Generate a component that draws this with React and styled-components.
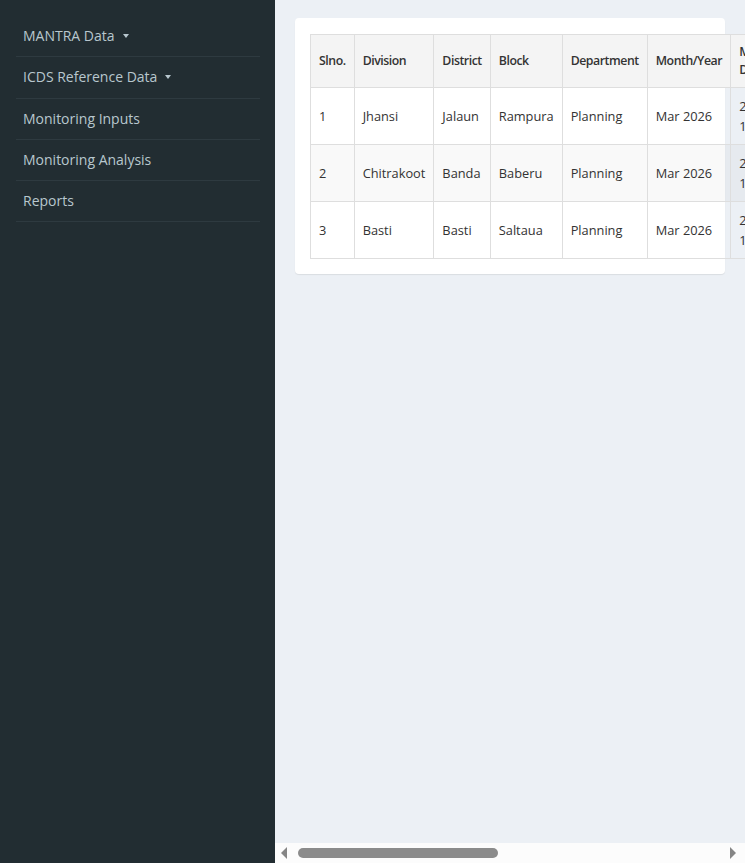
import React from "react";
import styled, { createGlobalStyle } from "styled-components";

const Global = createGlobalStyle`
  html, body { margin: 0; padding: 0; height: 100%; }
  body {
    font-family: "Open Sans", "Noto Sans", sans-serif;
    color: #333;
    background: #ecf0f5;
  }
  * { box-sizing: border-box; }
`;

const Layout = styled.div`
  display: flex;
  height: 100vh;
  width: 100vw;
  overflow: hidden;
`;

const Sidebar = styled.aside`
  flex: 0 0 275px;
  background: #222d32;
  padding: 16px 15px 0 16px;
`;

const Menu = styled.ul`
  list-style: none;
  margin: 0;
  padding: 0;
`;

const MenuItem = styled.li`
  display: flex;
  align-items: center;
  padding: 10px 7px;
  line-height: 20.3px;
  font-size: 14px;
  color: #b8c7ce;
  border-bottom: 1px solid #2e3a40;
`;

const Caret = styled.span`
  display: inline-block;
  width: 0;
  height: 0;
  margin-left: 8px;
  border-top: 4px solid #b8c7ce;
  border-left: 3.5px solid transparent;
  border-right: 3.5px solid transparent;
`;

const Main = styled.main`
  flex: 1 1 auto;
  min-width: 0;
  display: flex;
  flex-direction: column;
  background: #ecf0f5;
`;

const Content = styled.div`
  flex: 1 1 auto;
  min-height: 0;
  overflow: hidden;
  padding: 18px 20px;
`;

const HScrollbar = styled.div`
  flex: 0 0 20px;
  display: flex;
  align-items: center;
  background: #fcfcfc;
`;

const ArrowButton = styled.div`
  flex: 0 0 20px;
  height: 20px;
  display: flex;
  align-items: center;
  justify-content: ${(p) => (p.$dir === "left" ? "flex-start" : "flex-end")};
  padding: ${(p) => (p.$dir === "left" ? "0 0 0 6px" : "0 9px 0 0")};

  &::before {
    content: "";
    width: 0;
    height: 0;
    border-top: 6px solid transparent;
    border-bottom: 6px solid transparent;
    ${(p) =>
      p.$dir === "left"
        ? "border-right: 6px solid #858585;"
        : "border-left: 6px solid #858585;"}
  }
`;

const Track = styled.div`
  flex: 1 1 auto;
  height: 20px;
  display: flex;
  align-items: center;
  padding: 0 3px;
`;

const Thumb = styled.div`
  height: 10px;
  width: ${(p) => p.$ratio}%;
  background: #8b8b8b;
  border-radius: 5px;
`;

const Card = styled.section`
  background: #fff;
  border-radius: 4px;
  box-shadow: 0 1px 1px rgba(0, 0, 0, 0.08);
  padding: 16px 15px 15px;
`;

const Table = styled.table`
  width: 100%;
  border-collapse: collapse;
  font-size: 12.8px;
  color: #333;
`;

const Th = styled.th`
  text-align: left;
  font-weight: 600;
  font-size: 12.3px;
  letter-spacing: -0.45px;
  background: #f4f4f4;
  border: 1px solid #dedede;
  padding: 8px;
  line-height: 18px;
  vertical-align: middle;
`;

const Td = styled.td`
  border: 1px solid #dedede;
  padding: 8px;
  line-height: 20px;
  vertical-align: middle;
`;

const Tr = styled.tr`
  background: ${(p) => (p.$striped ? "rgba(0,0,0,0.025)" : "transparent")};
`;

const menu = [
  { label: "MANTRA Data", caret: true },
  { label: "ICDS Reference Data", caret: true },
  { label: "Monitoring Inputs" },
  { label: "Monitoring Analysis" },
  { label: "Reports" },
];

const headers = [
  "Slno.",
  "Division",
  "District",
  "Block",
  "Department",
  "Month/Year",
  "Monitoring Date",
  "Submitted By",
  "Designation",
  "Status",
  "Remarks",
  "Action",
];

const rows = [
  ["1", "Jhansi", "Jalaun", "Rampura", "Planning", "Mar 2026", "2026-03-12 10:45", "Ramesh Kumar", "Supervisor", "Approved", "Satisfactory", "View"],
  ["2", "Chitrakoot", "Banda", "Baberu", "Planning", "Mar 2026", "2026-03-14 11:20", "Suresh Singh", "Supervisor", "Pending", "Satisfactory", "View"],
  ["3", "Basti", "Basti", "Saltaua", "Planning", "Mar 2026", "2026-03-15 12:05", "Anita Devi", "Supervisor", "Approved", "Satisfactory", "View"],
];

export default function App() {
  return (
    <>
      <Global />
      <Layout>
        <Sidebar>
          <Menu>
            {menu.map((m) => (
              <MenuItem key={m.label}>
                {m.label}
                {m.caret && <Caret />}
              </MenuItem>
            ))}
          </Menu>
        </Sidebar>
        <Main>
          <Content>
            <Card>
              <Table>
                <thead>
                  <tr>
                    {headers.map((h) => (
                      <Th key={h}>{h}</Th>
                    ))}
                  </tr>
                </thead>
                <tbody>
                  {rows.map((r, i) => (
                    <Tr key={i} $striped={i % 2 === 1}>
                      {r.map((c, j) => (
                        <Td key={j}>{c}</Td>
                      ))}
                    </Tr>
                  ))}
                </tbody>
              </Table>
            </Card>
          </Content>
          <HScrollbar>
            <ArrowButton $dir="left" />
            <Track>
              <Thumb $ratio={47.2} />
            </Track>
            <ArrowButton $dir="right" />
          </HScrollbar>
        </Main>
      </Layout>
    </>
  );
}
